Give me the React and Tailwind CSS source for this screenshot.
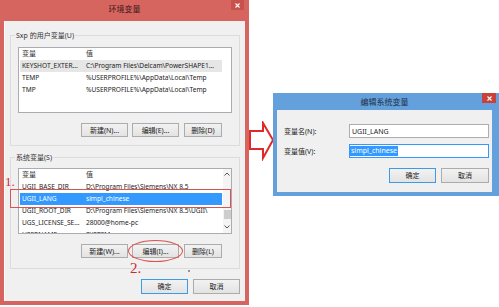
import React from "react";

const FONT = "font-['Noto_Sans','Noto_Sans_CJK_SC',sans-serif]";

function Btn({ children, className = "", def = false }) {
  return (
    <div
      className={
        "flex items-center justify-center border text-[7px] leading-none text-[#222] bg-gradient-to-b from-[#f2f2f2] to-[#e3e3e3] " +
        (def ? "border-[#3c9be8] " : "border-[#acacac] ") +
        className
      }
    >
      {children}
    </div>
  );
}

function Row({ name, value, variant }) {
  const bg =
    variant === "sel"
      ? "bg-[#3399ff] text-white"
      : variant === "gray"
      ? "bg-[#e6e6e6] text-[#222]"
      : "text-[#222]";
  return (
    <div className={"ml-[1px] w-[202px] h-[12px] shrink-0 flex text-[6.6px] leading-[12px] whitespace-nowrap overflow-hidden " + bg}>
      <div className="w-[66px] pl-[2px] overflow-hidden">{name}</div>
      <div className="flex-1 overflow-hidden">{value}</div>
    </div>
  );
}

function Header() {
  return (
    <div className="h-[12px] shrink-0 flex text-[7px] leading-[12px] text-[#333]">
      <div className="w-[67px] pl-[3px]">变量</div>
      <div>值</div>
    </div>
  );
}

function Chevron({ up }) {
  return (
    <svg width="6" height="4" viewBox="0 0 6 4">
      <path d={up ? "M0.5 3.5 L3 1 L5.5 3.5" : "M0.5 0.5 L3 3 L5.5 0.5"} fill="none" stroke="#555" strokeWidth="1" />
    </svg>
  );
}

export default function App() {
  return (
    <div className={"relative w-[499px] h-[307px] bg-white overflow-hidden " + FONT}>
      {/* Left dialog: 环境变量 */}
      <div className="w-[249px] h-[305px] bg-[#d6655f] flex flex-col pl-[4px] pr-[4px] pb-[4px]">
        <div className="h-[21px] relative flex justify-center pt-[3px]">
          <span className="text-[8px] leading-[11px] text-[#3b1715]">环境变量</span>
          <div className="absolute right-[1px] top-0 w-[13px] h-[10px] bg-[#c8524b] flex items-center justify-center">
            <svg width="5" height="5" viewBox="0 0 5 5">
              <path d="M0.5 0.5 L4.5 4.5 M4.5 0.5 L0.5 4.5" stroke="white" strokeWidth="1.1" />
            </svg>
          </div>
        </div>
        <div className="flex-1 bg-[#f0f0f0] flex flex-col border-l border-white">
          {/* User variables group */}
          <fieldset className="mx-[5px] mt-[9px] border border-[#dcdcdc] pl-[7px] pr-[6px] pb-[8px]">
            <legend className="-ml-[3px] px-[1px] text-[7px] leading-[11px] text-[#333]">Sxp 的用户变量(U)</legend>
            <div className="mt-[6px] w-[214px] h-[66px] bg-white border border-[#a9acb2] flex flex-col">
              <Header />
              <Row name="KEYSHOT_EXTER..." value="C:\Program Files\Delcam\PowerSHAPE1..." variant="gray" />
              <Row name="TEMP" value="%USERPROFILE%\AppData\Local\Temp" />
              <Row name="TMP" value="%USERPROFILE%\AppData\Local\Temp" />
            </div>
            <div className="mt-[10px] h-[14px] flex pl-[63px]">
              <Btn className="w-[47px] h-[14px]">新建(N)...</Btn>
              <Btn className="ml-[4px] w-[47px] h-[14px]">编辑(E)...</Btn>
              <Btn className="ml-[5px] w-[38px] h-[14px]">删除(D)</Btn>
            </div>
          </fieldset>

          {/* System variables group */}
          <fieldset className="mx-[5px] mt-[6px] border border-[#dcdcdc] pl-[7px] pr-[6px] pb-[10px]">
            <legend className="-ml-[3px] px-[1px] text-[7px] leading-[11px] text-[#333]">系统变量(S)</legend>
            <div className="mt-[5px] w-[214px] h-[66px] bg-white border border-[#a9acb2] flex overflow-hidden">
              <div className="flex-1 flex flex-col overflow-hidden">
                <Header />
                <Row name="UGII_BASE_DIR" value="D:\Program Files\Siemens\NX 8.5" />
                <Row name="UGII_LANG" value="simpl_chinese" variant="sel" />
                <Row name="UGII_ROOT_DIR" value="D:\Program Files\Siemens\NX 8.5\UGII\" />
                <Row name="UGS_LICENSE_SE..." value="28000@home-pc" />
                <Row name="USERNAME" value="SYSTEM" />
              </div>
              <div className="w-[8px] bg-[#f4f4f4] flex flex-col items-center">
                <div className="h-[10px] flex items-center">
                  <Chevron up />
                </div>
                <div className="mt-[31px] w-[7px] h-[9px] bg-[#cdcdcd]" />
                <div className="mt-[4px] h-[8px] flex items-center">
                  <Chevron />
                </div>
              </div>
            </div>
            <div className="mt-[10px] h-[14px] flex pl-[63px]">
              <Btn className="w-[47px] h-[14px]">新建(W)...</Btn>
              <Btn className="ml-[4px] w-[47px] h-[14px]">编辑(I)...</Btn>
              <Btn className="ml-[5px] w-[38px] h-[14px]">删除(L)</Btn>
            </div>
          </fieldset>

          <div className="mt-[10px] flex justify-end pr-[5px]">
            <Btn def className="w-[47px] h-[15px]">确定</Btn>
            <Btn className="ml-[5px] w-[47px] h-[15px]">取消</Btn>
          </div>
        </div>
      </div>

      {/* Annotations on left dialog */}
      <div className="absolute left-[10px] top-[189px] w-[221px] h-[19px] border border-[#d9534f]" />
      <div className="absolute left-[5px] top-[175px] text-[13px] leading-none text-[#cc2b2b] font-['Liberation_Serif',serif]">1.</div>
      <div className="absolute left-[128px] top-[240px] w-[55px] h-[22px] rounded-[50%] border border-[#d9534f]" />
      <div className="absolute left-[130px] top-[261px] text-[15px] leading-none text-[#cc2b2b] font-['Liberation_Serif',serif]">2.</div>
      <div className="absolute left-[188px] top-[270px] w-[2px] h-[2px] rounded-full bg-[#777]" />

      {/* Arrow */}
      <svg className="absolute left-[249px] top-[121px]" width="27" height="40" viewBox="0 0 27 40">
        <path d="M1 10 L14 10 L14 2 L24 19 L14 37 L14 28 L1 28 Z" fill="white" stroke="#e02a2a" strokeWidth="2" strokeLinejoin="miter" />
      </svg>

      {/* Right dialog: 编辑系统变量 */}
      <div className="absolute left-[273px] top-[93px] w-[226px] h-[103px] bg-[#64a1dc] flex flex-col pl-[4px] pr-[7px] pb-[4px]">
        <div className="h-[17px] relative flex items-center justify-center">
          <span className="text-[8px] leading-[11px] text-[#1d2f45]">编辑系统变量</span>
          <div className="absolute right-[-4px] top-0 w-[14px] h-[10px] bg-[#c7423b] flex items-center justify-center">
            <svg width="5" height="5" viewBox="0 0 5 5">
              <path d="M0.5 0.5 L4.5 4.5 M4.5 0.5 L0.5 4.5" stroke="white" strokeWidth="1.1" />
            </svg>
          </div>
        </div>
        <div className="flex-1 bg-[#f0f0f0] flex flex-col pl-[7px] pr-[3px]">
          <div className="mt-[14px] flex items-center h-[14px]">
            <div className="w-[65px] text-[7px] leading-none text-[#222]">变量名(N):</div>
            <div className="flex-1 h-[14px] bg-white border border-[#abadb3] flex items-center pl-[2px] text-[7px] leading-none text-[#222]">UGII_LANG</div>
          </div>
          <div className="mt-[6px] flex items-center h-[14px]">
            <div className="w-[65px] text-[7px] leading-none text-[#222]">变量值(V):</div>
            <div className="flex-1 h-[14px] bg-white border border-[#3399ff] flex items-center text-[7px]">
              <span className="bg-[#3399ff] text-white h-[10px] leading-[10px] px-[1px]">simpl_chinese</span>
            </div>
          </div>
          <div className="mt-[10px] flex justify-end">
            <Btn def className="w-[47px] h-[15px]">确定</Btn>
            <Btn className="ml-[5px] w-[48px] h-[15px]">取消</Btn>
          </div>
        </div>
      </div>
    </div>
  );
}
